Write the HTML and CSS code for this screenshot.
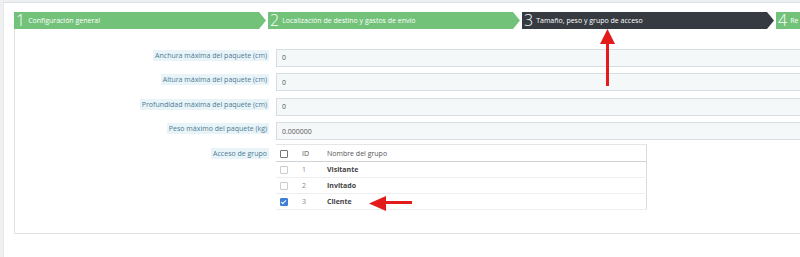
FILE: index.html
```html
<!DOCTYPE html>
<html lang="es">
<head>
    <meta charset="UTF-8">
    <title>Transportista - Tamaño, peso y grupo de acceso</title>
    <link rel="stylesheet" href="styles.css">
</head>
<body>
    <div class="page">
        <div class="wizard">
            <div class="steps">
                <div class="step done"><span class="num">1</span>Configuración general</div>
                <div class="step done"><span class="num">2</span>Localización de destino y gastos de envío</div>
                <div class="step current"><span class="num">3</span>Tamaño, peso y grupo de acceso</div>
                <div class="step done last"><span class="num">4</span>Re</div>
            </div>

            <div class="content">
                <div class="form-row">
                    <label class="label"><span>Anchura máxima del paquete (cm)</span></label>
                    <div class="field"><input type="text" value="0"></div>
                </div>
                <div class="form-row">
                    <label class="label"><span>Altura máxima del paquete (cm)</span></label>
                    <div class="field"><input type="text" value="0"></div>
                </div>
                <div class="form-row">
                    <label class="label"><span>Profundidad máxima del paquete (cm)</span></label>
                    <div class="field"><input type="text" value="0"></div>
                </div>
                <div class="form-row">
                    <label class="label"><span>Peso máximo del paquete (kg)</span></label>
                    <div class="field"><input type="text" value="0.000000"></div>
                </div>
                <div class="form-row group-row">
                    <label class="label"><span>Acceso de grupo</span></label>
                    <div class="field">
                        <table class="groups">
                            <thead>
                                <tr><th class="col-check"><span class="check head"></span></th><th class="col-id">ID</th><th>Nombre del grupo</th></tr>
                            </thead>
                            <tbody>
                                <tr><td class="col-check"><span class="check"></span></td><td class="col-id">1</td><td class="name">Visitante</td></tr>
                                <tr><td class="col-check"><span class="check"></span></td><td class="col-id">2</td><td class="name">Invitado</td></tr>
                                <tr><td class="col-check"><span class="check on"></span></td><td class="col-id">3</td><td class="name">Cliente</td></tr>
                            </tbody>
                        </table>
                    </div>
                </div>
            </div>
        </div>
    </div>

    <!-- annotation arrows drawn over the screenshot -->
    <svg class="annot" width="800" height="257" viewBox="0 0 800 257">
        <rect x="606" y="42" width="3" height="44" fill="#e31b1b"/>
        <polygon points="607.5,29 600,44 615,44" fill="#e31b1b"/>
        <rect x="384" y="201" width="28" height="3" fill="#e31b1b"/>
        <polygon points="369,203.5 386,196 386,211" fill="#e31b1b"/>
    </svg>
</body>
</html>
```

FILE: styles.css
```css
body {
    margin: 0;
    background-color: #eef0f1;
    font-family: 'Open Sans', 'Liberation Sans', sans-serif;
    color: #555;
    overflow: hidden;
}
.page {
    margin: 2px 0 0 3px;
    height: 255px;
    background: #fff;
    border-top: 1px solid #dcdfe1;
    border-left: 1px solid #e6e8e9;
    padding: 9px 0 0 10px;
    box-sizing: border-box;
}
.wizard {
    width: 800px;
}
.steps {
    display: flex;
    gap: 2px;
    height: 17px;
}
.step {
    flex: 0 0 252px;
    display: flex;
    align-items: center;
    color: #fff;
    font-size: 7px;
    white-space: nowrap;
    clip-path: polygon(0 0, calc(100% - 7px) 0, 100% 50%, calc(100% - 7px) 100%, 0 100%);
}
.step.last {
    flex: 0 0 24px;
    clip-path: none;
}
.step.done {
    background-color: #72c279;
}
.step.current {
    background-color: #363a41;
}
.num {
    font-size: 16px;
    font-weight: 300;
    line-height: 17px;
    padding: 0 3px 0 2px;
}
.content {
    border: 1px solid #e1e4e5;
    border-top: none;
    border-right: none;
    height: 205px;
    padding-top: 17px;
    box-sizing: border-box;
}
.form-row {
    display: flex;
    align-items: center;
    gap: 7px;
    height: 18px;
    margin-bottom: 6.5px;
}
.label {
    flex: 0 0 254px;
    text-align: right;
    font-size: 7px;
    color: #4d7a95;
}
.label span {
    background-color: #e9f4f8;
    padding: 1px 2px;
}
.field {
    flex: 1;
}
.field input {
    width: 100%;
    height: 18px;
    box-sizing: border-box;
    border: 1px solid #d7dee1;
    background-color: #f5f8f9;
    font-family: 'Open Sans', 'Liberation Sans', sans-serif;
    font-size: 7px;
    color: #555;
    padding: 0 5px;
}
.group-row {
    align-items: flex-start;
    margin-top: 2px;
}
.group-row .label {
    padding-top: 5px;
}
.groups {
    width: 371px;
    border-collapse: collapse;
    border-right: 1px solid #d9dcde;
    border-bottom: 1px solid #d9dcde;
    font-size: 7px;
    color: #555;
}
.groups th {
    font-weight: 400;
    text-align: left;
    height: 16px;
    padding: 0;
    border-top: 1px solid #e3e6e7;
    border-bottom: 1px solid #cfd3d5;
}
.groups td {
    height: 15px;
    padding: 0;
    border-bottom: 1px solid #eceeef;
}
.groups .col-check {
    width: 20px;
    padding-left: 4px;
}
.groups .col-id {
    width: 25px;
    padding-left: 2px;
}
.groups td.col-id {
    color: #888;
}
.groups .name {
    font-weight: 700;
    color: #444;
}
.check {
    display: inline-block;
    width: 6px;
    height: 6px;
    border: 1px solid #ccc;
    border-radius: 1px;
    vertical-align: middle;
}
.check.head {
    border-color: #777;
}
.check.on {
    background-color: #3d7ed6;
    border-color: #3d7ed6;
    position: relative;
}
.check.on::after {
    content: '';
    position: absolute;
    left: 1px;
    top: 0;
    width: 2px;
    height: 4px;
    border: solid #fff;
    border-width: 0 1px 1px 0;
    transform: rotate(45deg);
}
.annot {
    position: absolute;
    left: 0;
    top: 0;
    pointer-events: none;
}
```
